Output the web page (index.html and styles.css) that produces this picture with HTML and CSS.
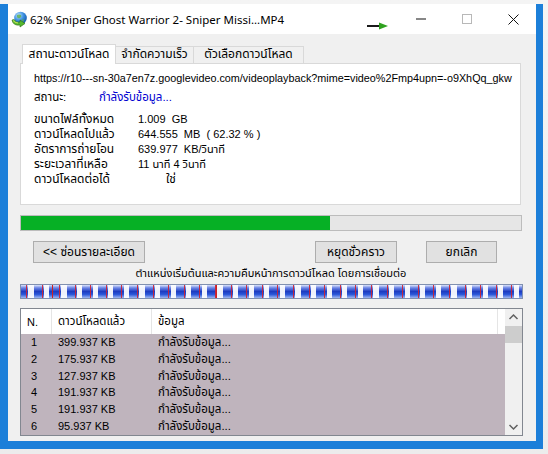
FILE: index.html
```html
<!DOCTYPE html>
<html lang="th">
<head>
<meta charset="utf-8">
<link rel="stylesheet" href="styles.css">
</head>
<body>
<div class="desk">
  <div class="window">
    <div class="titlebar">
      <svg class="appicon" width="17" height="17" viewBox="0 0 17 17">
        <defs>
          <radialGradient id="gl" cx="0.35" cy="0.3" r="0.8">
            <stop offset="0" stop-color="#bfe3ff"/>
            <stop offset="0.5" stop-color="#3a8ee0"/>
            <stop offset="1" stop-color="#0d4f9e"/>
          </radialGradient>
        </defs>
        <circle cx="9.5" cy="7" r="6.3" fill="url(#gl)"/>
        <path d="M6 4 q2 -1 4 0 q1 2 -1 3 q-2 1 -3 -1z M11 8 q2 0 2 2 q-1 1 -2 0z" fill="#5fb04a" opacity="0.8"/>
        <path d="M1 9 q1 6 8 5 l0 2 l5 -3.5 l-5 -3.5 l0 2 q-4 1 -6 -2.5z" fill="#55b82e" stroke="#2f6d10" stroke-width="0.6"/>
        <path d="M2 9.5 q2 2.5 5 2.5" fill="none" stroke="#e8f36a" stroke-width="0.8"/>
      </svg>
      <div class="title">62% Sniper Ghost Warrior 2- Sniper Missi...MP4</div>
      <svg class="speedarrow" width="22" height="8" viewBox="0 0 22 8">
        <rect x="0" y="3" width="13" height="2" fill="#1a1a1a"/>
        <path d="M12 0.5 L21 4 L12 7.5 Z" fill="#2fa21f"/>
      </svg>
      <div class="capbtn">
        <svg width="10" height="10" viewBox="0 0 10 10"><rect x="0" y="4.5" width="10" height="1" fill="#111"/></svg>
      </div>
      <div class="capbtn">
        <svg width="10" height="10" viewBox="0 0 10 10"><rect x="0.5" y="0.5" width="9" height="9" fill="none" stroke="#b8b8b8"/></svg>
      </div>
      <div class="capbtn">
        <svg width="11" height="11" viewBox="0 0 11 11"><path d="M0.5 0.5 L10.5 10.5 M10.5 0.5 L0.5 10.5" stroke="#111" stroke-width="1"/></svg>
      </div>
    </div>

    <div class="client">
      <div class="tabs">
        <div class="tab active t1">สถานะดาวน์โหลด</div>
        <div class="tab t2">จำกัดความเร็ว</div>
        <div class="tab t3">ตัวเลือกดาวน์โหลด</div>
      </div>
      <div class="panel">
        <div class="url">https://r10---sn-30a7en7z.googlevideo.com/videoplayback?mime=video%2Fmp4upn=-o9XhQq_gkw</div>
        <div class="statusline">
          <span class="lbl-s">สถานะ:</span>
          <span class="status">กำลังรับข้อมูล...</span>
        </div>
        <div class="info">
          <div class="row"><span class="lbl">ขนาดไฟล์ทั้งหมด</span><span class="val">1.009  GB</span></div>
          <div class="row"><span class="lbl">ดาวน์โหลดไปแล้ว</span><span class="val">644.555  MB  ( 62.32 % )</span></div>
          <div class="row"><span class="lbl">อัตราการถ่ายโอน</span><span class="val">639.977  KB/วินาที</span></div>
          <div class="row"><span class="lbl">ระยะเวลาที่เหลือ</span><span class="val">11 นาที 4 วินาที</span></div>
          <div class="row"><span class="lbl">ดาวน์โหลดต่อได้</span><span class="val yes">ใช่</span></div>
        </div>
      </div>

      <div class="progress"><div class="fill" style="width:61.8%"></div></div>

      <div class="buttons">
        <div class="btn b1">&lt;&lt; ซ่อนรายละเอียด</div>
        <div class="spacer"></div>
        <div class="btn b2">หยุดชั่วคราว</div>
        <div class="btn b3">ยกเลิก</div>
      </div>

      <div class="caption">ตำแหน่งเริ่มต้นและความคืบหน้าการดาวน์โหลด โดยการเชื่อมต่อ</div>
      <div class="segbar"></div>

      <div class="list">
        <div class="listmain">
          <div class="lhead">
            <div class="c1">N.</div>
            <div class="c2">ดาวน์โหลดแล้ว</div>
            <div class="c3">ข้อมูล</div>
            <div class="c4"></div>
          </div>
          <div class="lrows">
            <div class="lrow"><span class="c1">1</span><span class="c2">399.937 KB</span><span class="c3">กำลังรับข้อมูล...</span></div>
            <div class="lrow"><span class="c1">2</span><span class="c2">175.937 KB</span><span class="c3">กำลังรับข้อมูล...</span></div>
            <div class="lrow"><span class="c1">3</span><span class="c2">127.937 KB</span><span class="c3">กำลังรับข้อมูล...</span></div>
            <div class="lrow"><span class="c1">4</span><span class="c2">191.937 KB</span><span class="c3">กำลังรับข้อมูล...</span></div>
            <div class="lrow"><span class="c1">5</span><span class="c2">191.937 KB</span><span class="c3">กำลังรับข้อมูล...</span></div>
            <div class="lrow"><span class="c1">6</span><span class="c2">95.937 KB</span><span class="c3">กำลังรับข้อมูล...</span></div>
          </div>
        </div>
        <div class="scroll">
          <svg width="17" height="17" viewBox="0 0 17 17"><path d="M4.5 10 L8.5 6 L12.5 10" fill="none" stroke="#606060" stroke-width="1.5"/></svg>
          <div class="thumb"></div>
          <div class="track"></div>
          <svg width="17" height="17" viewBox="0 0 17 17"><path d="M4.5 7 L8.5 11 L12.5 7" fill="none" stroke="#606060" stroke-width="1.5"/></svg>
        </div>
      </div>
    </div>
  </div>
</div>
</body>
</html>
```

FILE: styles.css
```css
* { box-sizing: border-box; }
html, body { margin: 0; padding: 0; }
body {
  width: 548px;
  height: 454px;
  overflow: hidden;
  background: #e6e6e6;
  font-family: "Liberation Sans", Tahoma, "Noto Sans Thai", "Noto Sans", sans-serif;
  font-size: 11px;
  color: #000;
}
.desk {
  padding-top: 4px;
  height: 454px;
  background: linear-gradient(#f4f4f4, #ececec);
}
.window {
  width: 543px;
  height: 445px;
  border-left: 8px solid #1c7fd9;
  border-right: 7px solid #1c7fd9;
  border-bottom: 8px solid #1c7fd9;
  background: #f0f0f0;
  display: flex;
  flex-direction: column;
}
.titlebar {
  height: 30px;
  background: #fff;
  display: flex;
  align-items: center;
  flex: none;
}
.appicon { margin-left: 3px; margin-top: 1px; flex: none; }
.title {
  margin-left: 2px;
  font-family: "Noto Sans", "Liberation Sans", sans-serif;
  font-size: 11.5px;
  color: #000;
  white-space: nowrap;
  flex: 1;
}
.speedarrow { margin-right: 9px; margin-top: 13px; flex: none; }
.capbtn {
  width: 46px;
  height: 30px;
  display: flex;
  align-items: center;
  justify-content: center;
  flex: none;
}
.client {
  flex: 1;
  padding: 10px 0 0 12px;
  display: flex;
  flex-direction: column;
}
.tabs {
  display: flex;
  height: 19px;
  padding-left: 2px;
  align-items: flex-end;
}
.tab {
  height: 17px;
  line-height: 15px;
  border: 1px solid #d9d9d9;
  border-bottom: none;
  background: #f0f0f0;
  white-space: nowrap;
  font-size: 12px;
  text-align: center;
}
.t1 { width: 94px; }
.t2 { width: 78px; }
.t3 { width: 110px; margin-left: 0; }
.tab + .tab { border-left: none; }
.tab.active {
  height: 20px;
  line-height: 18px;
  background: #fff;
  margin-bottom: -1px;
  position: relative;
  z-index: 1;
}
.panel {
  width: 501px;
  height: 142px;
  background: #fff;
  border: 1px solid #d9d9d9;
  padding: 7px 0 0 13px;
}
.url {
  width: 480px;
  overflow: hidden;
  white-space: nowrap;
  line-height: 15px;
  font-size: 10.8px;
}
.statusline {
  display: flex;
  margin-top: 4px;
  line-height: 15px;
}
.lbl-s { width: 65px; font-size: 11.5px; }
.status { color: #0000d0; font-size: 11.5px; }
.info { margin-top: 7px; }
.row { display: flex; height: 15px; line-height: 15px; }
.lbl { width: 104px; white-space: nowrap; font-size: 12px; }
.val { white-space: pre; }
.val.yes { padding-left: 28px; font-size: 12px; }

.progress {
  margin-top: 10px;
  width: 502px;
  height: 16px;
  background: #e6e6e6;
  border: 1px solid #bcbcbc;
}
.fill { height: 100%; background: #06b025; }

.buttons {
  display: flex;
  margin-top: 10px;
  width: 502px;
  padding-left: 13px;
  height: 22px;
}
.btn {
  height: 22px;
  background: #e1e1e1;
  border: 1px solid #adadad;
  display: flex;
  align-items: center;
  justify-content: center;
  white-space: nowrap;
  font-size: 12px;
}
.b1 { width: 112px; }
.spacer { flex: 1; }
.b2 { width: 82px; }
.b3 { width: 71px; margin-left: 29px; margin-right: 25px; }

.caption {
  width: 502px;
  text-align: center;
  line-height: 15px;
  margin-top: 3px;
}
.segbar {
  margin-top: 3px;
  width: 503px;
  height: 15px;
  border: 1px solid #8090b0;
  background:
    linear-gradient(to right, transparent 31px, #d02020 31px, #d02020 32px, transparent 32px, transparent 195px, #d02020 195px, #d02020 196px, transparent 196px),
    repeating-linear-gradient(to right,
      transparent 0, transparent 8px,
      rgba(208,32,48,0.9) 8px, rgba(208,32,48,0.9) 9px,
      transparent 9px, transparent 10.3px,
      rgba(255,255,255,0.92) 10.3px, rgba(255,255,255,0.92) 15.6px),
    linear-gradient(to bottom, #dfe6fb 0%, #6d86e6 22%, #1e3cc0 50%, #2a56d8 72%, #9fb6f2 100%);
  background-position: 0 0, 30px 0, 0 0;
}
.list {
  margin-top: 9px;
  width: 503px;
  height: 128px;
  border: 1px solid #828790;
  background: #fff;
  display: flex;
}
.listmain { flex: 1; display: flex; flex-direction: column; }
.lhead {
  height: 25px;
  display: flex;
  align-items: stretch;
  background: #fff;
}
.lhead > div {
  display: flex;
  align-items: center;
  border-right: 1px solid #e5e5e5;
}
.lhead .c1 { width: 31px; padding-left: 6px; }
.lhead .c2 { width: 100px; padding-left: 6px; font-size: 11.5px; }
.lhead .c3 { width: 346px; padding-left: 6px; font-size: 11.5px; }
.lhead .c4 { flex: 1; border-right: none; }
.lrows { flex: 1; background: #bfb4bd; }
.lrow { display: flex; height: 16.8px; line-height: 16.8px; }
.lrow .c1 { width: 31px; padding-left: 10px; }
.lrow .c2 { width: 100px; padding-left: 6px; }
.lrow .c3 { padding-left: 6px; font-size: 11.5px; }
.scroll {
  width: 17px;
  background: #f0f0f0;
  display: flex;
  flex-direction: column;
}
.scroll svg { flex: none; display: block; }
.thumb { height: 17px; background: #cdcdcd; flex: none; }
.track { flex: 1; }
```
